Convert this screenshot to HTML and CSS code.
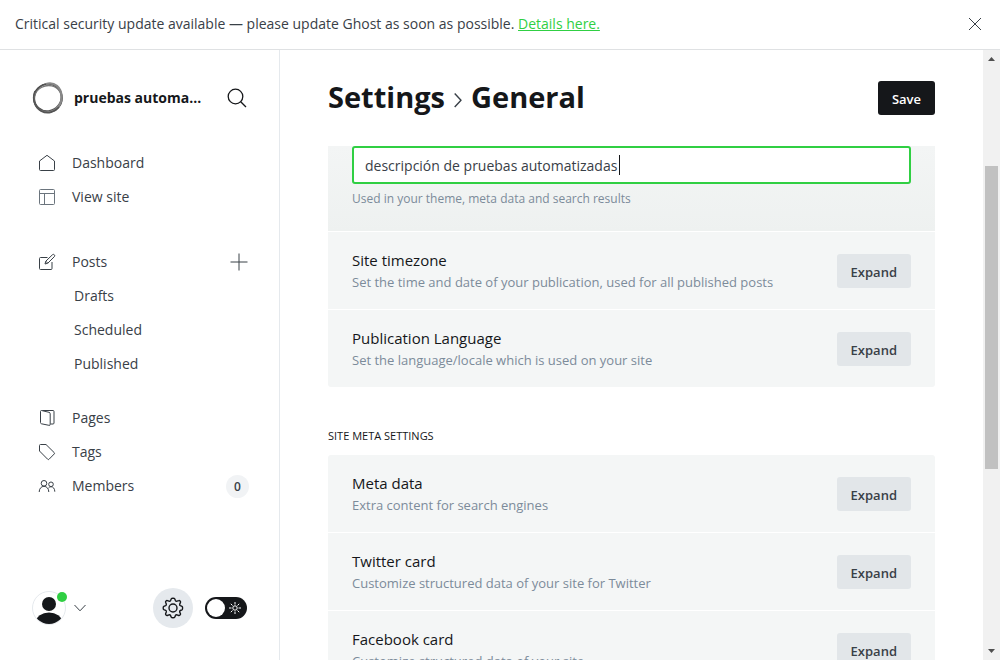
FILE: index.html
```html
<!DOCTYPE html>
<html lang="en">
<head>
<meta charset="utf-8">
<title>Settings - General</title>
<link rel="stylesheet" href="styles.css">
</head>
<body>
<aside class="alert">
  <p class="alert-text">Critical security update available — please update Ghost as soon as possible. <a href="#">Details here.</a></p>
  <button class="icon-button" type="button" aria-label="Close">
    <svg width="14" height="14" viewBox="0 0 14 14"><path d="M1 1l12 12M13 1L1 13"/></svg>
  </button>
</aside>
<div class="app">
  <nav class="sidebar" aria-label="Main">
    <header class="brand">
      <svg class="brand-logo" width="32" height="32" viewBox="0 0 32 32">
        <ellipse cx="16" cy="16" rx="14" ry="14" stroke="#444" stroke-width="1.7"/>
        <ellipse cx="16.5" cy="15.5" rx="14" ry="13" stroke="#555" stroke-width="1.2" transform="rotate(-50 16 16)"/>
        <ellipse cx="15.4" cy="16.4" rx="14" ry="12.8" stroke="#777" stroke-width="1.3" transform="rotate(-30 16 16)"/>
        <path d="M14 2C22-.5 30 5 29.500 16c0 4-2 8-5 10.500" stroke="#888" stroke-width="2.200"/>
        <path d="M3 9C0 16 2 25 9 29s14 1 18-4" stroke="#555" stroke-width="1.500"/>
      </svg>
      <span class="brand-name">pruebas automa...</span>
      <button class="icon-button search" type="button" aria-label="Search">
        <svg width="20" height="20" viewBox="0 0 20 20"><circle cx="8.500" cy="8.500" r="7.300"/><path d="M13.700 13.700L19 19"/></svg>
      </button>
    </header>
    <ul class="nav">
      <li><a href="#"><svg width="18" height="18" viewBox="0 0 18 18"><path d="M1.500 7L9 1.300 16.500 7v8.500a1 1 0 0 1-1 1h-13a1 1 0 0 1-1-1z"/></svg>Dashboard</a></li>
      <li><a href="#"><svg class="soft" width="18" height="18" viewBox="0 0 18 18"><rect x="1.500" y="1.500" width="15" height="15" rx="1"/><path d="M1.500 5.500h15M6.500 5.500v11"/></svg>View site</a></li>
    </ul>
    <ul class="nav">
      <li class="with-action"><a href="#"><svg width="18" height="18" viewBox="0 0 18 18"><path d="M9.500 4.500h-7a1 1 0 0 0-1 1v10a1 1 0 0 0 1 1h10.500a1 1 0 0 0 1-1V9M7 11l.8-2.800 6.600-6.400a1.300 1.300 0 0 1 1.900 1.900l-6.500 6.500zM7.800 8.200l2 2"/></svg>Posts</a>
        <button class="icon-button plus" type="button" aria-label="New post"><svg width="18" height="18" viewBox="0 0 18 18"><path d="M9 .5v17M.5 9h17"/></svg></button></li>
      <li class="sub"><a href="#">Drafts</a></li>
      <li class="sub"><a href="#">Scheduled</a></li>
      <li class="sub"><a href="#">Published</a></li>
    </ul>
    <ul class="nav nav-last">
      <li><a href="#"><svg width="18" height="18" viewBox="0 0 18 18"><path d="M4.500 1.500h10.500a1 1 0 0 1 1 1V14a1 1 0 0 1-1 1h-2.500M3.500 1.500l7.500 1.800a1.500 1.500 0 0 1 1.200 1.500v10.500a1 1 0 0 1-1.300 1L3.500 14.800a1.300 1.300 0 0 1-1-1.300V2.500a1 1 0 0 1 1-1z"/></svg>Pages</a></li>
      <li><a href="#"><svg width="18" height="18" viewBox="0 0 18 18"><path d="M1.500 2.500a1 1 0 0 1 1-1h5.500l8.200 8.100a1 1 0 0 1 0 1.400l-5.100 5.200a1 1 0 0 1-1.500 0L1.500 8z"/></svg>Tags</a></li>
      <li class="with-action"><a href="#"><svg width="18" height="18" viewBox="0 0 18 18"><circle cx="6" cy="6.300" r="2.800"/><circle cx="13" cy="7.300" r="2.300"/><path d="M1.200 15c0-3.300 2-5.700 4.800-5.700s4.800 2.400 4.800 5.700M10.500 11c.6-.8 1.500-1.300 2.500-1.300 2.200 0 3.800 2 3.800 5"/></svg>Members</a><span class="count">0</span></li>
    </ul>
    <footer class="tools">
      <button class="user" type="button" aria-label="User menu">
        <svg width="34" height="34" viewBox="0 0 34 34"><defs><clipPath id="face"><circle cx="17" cy="17" r="16"/></clipPath></defs><circle class="ring" cx="17" cy="17" r="16.500"/><g clip-path="url(#face)" class="solid"><circle cx="17" cy="13" r="7"/><ellipse cx="17" cy="31" rx="13" ry="9.500"/></g></svg>
        <span class="presence"></span>
        <svg width="12" height="8" viewBox="0 0 12 8"><path d="M.5 1L6 6.800 11.500 1"/></svg>
      </button>
      <a class="settings" href="#" aria-label="Settings">
        <svg width="22" height="22" viewBox="0 0 22 22"><circle cx="11" cy="11" r="4"/><path d="M9.300 1.800c.4-.8 3-.8 3.400 0l.7 1.700c.3.600 1 .9 1.600.7l1.800-.6c.8-.3 2 1 1.700 1.800l-.8 1.700c-.2.600.1 1.300.7 1.600l1.600.7c.8.400.8 3 0 3.400l-1.600.7c-.6.300-.9 1-.7 1.600l.8 1.700c.3.800-1 2-1.800 1.700l-1.700-.6c-.6-.2-1.300.1-1.600.7l-.7 1.600c-.4.800-3 .8-3.400 0l-.7-1.600c-.3-.6-1-.9-1.600-.7l-1.700.6c-.8.300-2-1-1.700-1.800l.7-1.700c.2-.6-.1-1.300-.7-1.600L1.800 12.700c-.8-.4-.8-3 0-3.400l1.800-.7c.6-.3.900-1 .7-1.600l-.7-1.700c-.3-.8.900-2 1.700-1.700l1.700.6c.6.200 1.300-.1 1.600-.7z"/></svg>
      </a>
      <label class="switch"><input type="checkbox" aria-label="Night mode"><svg width="12" height="12" viewBox="0 0 12 12"><circle cx="6" cy="6" r="2.200"/><path d="M6 0v2.500M6 9.500V12M0 6h2.500M9.500 6H12M1.800 1.800l1.700 1.700M8.500 8.500l1.700 1.700M10.200 1.800L8.500 3.500M3.500 8.500l-1.700 1.700"/></svg></label>
    </footer>
  </nav>
  <main class="main">
    <header class="page-head">
      <h1><a href="#">Settings</a><svg width="8" height="16" viewBox="0 0 8 16"><path d="M.7 1.500L7 8.200.7 15"/></svg><span>General</span></h1>
      <button class="save" type="button">Save</button>
    </header>
    <div class="view">
      <section class="group group-first">
        <div class="open-row">
          <div class="field-wrap">
            <input id="description" class="field" type="text" value="descripción de pruebas automatizadas">
            <span class="caret"></span>
          </div>
          <label for="description">Used in your theme, meta data and search results</label>
        </div>
        <div class="row"><div><h3>Site timezone</h3><p>Set the time and date of your publication, used for all published posts</p></div><button type="button">Expand</button></div>
        <div class="row"><div><h3>Publication Language</h3><p>Set the language/locale which is used on your site</p></div><button type="button">Expand</button></div>
      </section>
      <h2>SITE META SETTINGS</h2>
      <section class="group">
        <div class="row"><div><h3>Meta data</h3><p>Extra content for search engines</p></div><button type="button">Expand</button></div>
        <div class="row"><div><h3>Twitter card</h3><p>Customize structured data of your site for Twitter</p></div><button type="button">Expand</button></div>
        <div class="row"><div><h3>Facebook card</h3><p>Customize structured data of your site</p></div><button type="button">Expand</button></div>
      </section>
    </div>
  </main>
  <div class="scrollbar" aria-hidden="true">
    <svg width="7" height="4" viewBox="0 0 7 4"><path d="M0 4L3.500 0 7 4z"/></svg>
    <div class="track"><div class="thumb"></div></div>
    <svg width="7" height="4" viewBox="0 0 7 4"><path d="M0 0l3.500 4L7 0z"/></svg>
  </div>
</div>
</body>
</html>
```
FILE: styles.css
```css
* { box-sizing: border-box; }
body {
  margin: 0;
  height: 100vh;
  display: flex;
  flex-direction: column;
  overflow: hidden;
  font: 14px/20px "Open Sans", "Noto Sans", sans-serif;
  color: #394047;
  background: #fff;
}
h1, h2, h3, p, ul { margin: 0; padding: 0; }
ul { list-style: none; }
a { color: inherit; text-decoration: none; }
button { font: inherit; border: 0; padding: 0; cursor: pointer; }
svg { flex: none; fill: none; stroke: #394047; stroke-width: 1; stroke-linejoin: round; }

.alert {
  flex: none;
  height: 50px;
  padding: 0 18px 2px 15px;
  display: flex;
  align-items: center;
  justify-content: space-between;
  border-bottom: 1px solid #dfe1e3;
}
.alert-text { font-size: 14px; }
.alert-text a { color: #30cf43; text-decoration: underline; }
.icon-button { display: flex; background: none; }

.app { flex: 1; min-height: 0; display: flex; }
.sidebar {
  flex: none;
  width: 280px;
  padding: 32px 30px 32px 32px;
  display: flex;
  flex-direction: column;
  border-right: 1px solid #e5e9ed;
}
.brand { height: 32px; display: flex; align-items: center; margin-bottom: 32px; }
.brand-name {
  width: 143px;
  margin: 0 10px;
  white-space: nowrap;
  font-weight: 700;
  color: #15171a;
}
.search svg { stroke: #15171a; stroke-width: 1.3; }
.nav { margin-bottom: 31px; }
.nav-last { margin-bottom: 0; }
.nav li { height: 34px; display: flex; align-items: center; justify-content: space-between; }
.nav a { display: flex; align-items: center; gap: 16px; padding-left: 6px; }
.nav .sub a { padding-left: 42px; }
.nav + .nav-last { margin-top: -11px; }
.nav .soft { stroke: #6b747d; }
.plus { margin-right: 1px; }
.count {
  width: 23px;
  height: 23px;
  border-radius: 12px;
  background: #f1f3f5;
  font-size: 12px;
  line-height: 23px;
  font-weight: 600;
  text-align: center;
}
.tools { margin-top: auto; height: 40px; display: flex; align-items: center; }
.user { position: relative; display: flex; align-items: center; gap: 8px; background: none; margin-right: auto; }
.ring { stroke: #e5e9ed; stroke-width: 1; }
.solid { fill: #15171a; stroke: none; }
.presence { position: absolute; left: 25px; top: 1px; width: 10px; height: 10px; border-radius: 50%; background: #30cf43; }
.settings {
  width: 40px;
  height: 40px;
  margin-right: 12px;
  display: flex;
  align-items: center;
  justify-content: center;
  border-radius: 50%;
  background: #e5e9ed;
}
.settings svg { stroke: #15171a; stroke-width: 1.4; }
.switch {
  width: 42px;
  height: 22px;
  margin-right: 2px;
  padding: 0 6px 0 2px;
  display: flex;
  align-items: center;
  justify-content: space-between;
  border-radius: 11px;
  background: #15171a;
}
.switch input { appearance: none; margin: 0; width: 18px; height: 18px; border-radius: 50%; background: #fff; }
.switch svg { stroke: #fff; stroke-width: 1; }

.main { flex: 1; min-width: 0; padding: 0 48px; display: flex; flex-direction: column; }
.page-head { flex: none; height: 96px; display: flex; align-items: center; justify-content: space-between; }
h1 { display: flex; align-items: center; gap: 9px; padding-bottom: 2px; font-size: 29px; line-height: 36px; font-weight: 700; color: #15171a; }
h1 svg { margin-top: 6px; stroke-width: 1.4; }
.save, .row button {
  height: 34px;
  padding: 2px 14px 0;
  border-radius: 3px;
  font-size: 13px;
  font-weight: 600;
}
.save { background: #15171a; color: #fff; }
.view { flex: 1; min-height: 0; overflow: hidden; }
.group { border-radius: 3px; overflow: hidden; }
.group-first { border-radius: 0 0 3px 3px; }
.open-row { padding: 0 24px 22px; background: linear-gradient(#f3f5f5, #eef1f0); }
.field-wrap { position: relative; }
.field {
  display: block;
  width: 100%;
  height: 38px;
  padding: 0 11px;
  border: 2px solid #30cf43;
  border-radius: 3px;
  outline: 0;
  background: #fff;
  color: #394047;
  font: inherit;
}
.caret { position: absolute; left: 267px; top: 9px; width: 1px; height: 20px; background: #15171a; }
.open-row label { display: block; padding-top: 5px; font-size: 12px; color: #7c8b9a; }
.row {
  height: 78px;
  padding: 0 24px;
  display: flex;
  align-items: center;
  justify-content: space-between;
  background: #f4f6f6;
  border-top: 1px solid #fff;
}
.group .row:first-child { height: 77px; border-top: 0; }
.row h3, .row p { line-height: 22px; }
.row h3 { font-size: 15px; font-weight: 500; color: #15171a; }
.row p { font-size: 13px; color: #7c8b9a; }
.row button { background: #e2e6e9; color: #394047; }
h2 { margin: 39px 0 9px; font-size: 11px; line-height: 20px; font-weight: 400; color: #15171a; }

.scrollbar {
  flex: none;
  width: 17px;
  padding: 7px 0;
  display: flex;
  flex-direction: column;
  align-items: center;
  background: #f1f1f1;
}
.scrollbar svg { fill: #505050; stroke: none; }
.track { flex: 1; width: 13px; padding: 105px 0 180px; display: flex; }
.thumb { flex: 1; background: #c1c1c1; }
```
